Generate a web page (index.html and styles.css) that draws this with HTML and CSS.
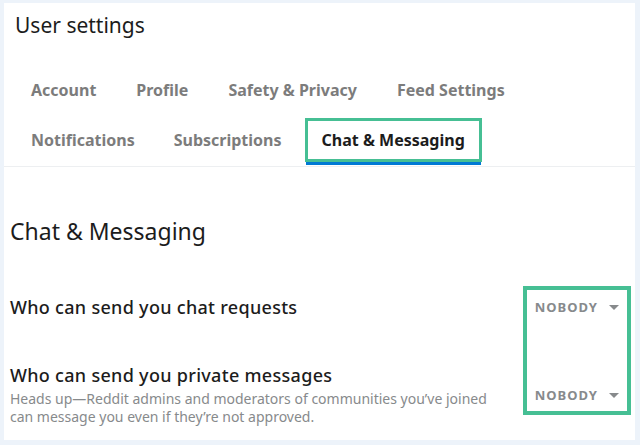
FILE: index.html
```html
<!DOCTYPE html>
<html lang="en">
<head>
  <meta charset="UTF-8">
  <meta name="viewport" content="width=device-width, initial-scale=1.0">
  <title>User settings</title>
  <link rel="stylesheet" href="styles.css">
</head>
<body>
  <div class="panel">
    <h1 class="page-title">User settings</h1>

    <!-- Settings tabs -->
    <nav class="tabs">
      <a class="tab">Account</a>
      <a class="tab">Profile</a>
      <a class="tab">Safety &amp; Privacy</a>
      <a class="tab">Feed Settings</a>
      <a class="tab">Notifications</a>
      <a class="tab">Subscriptions</a>
      <a class="tab active">Chat &amp; Messaging</a>
    </nav>

    <!-- Chat & Messaging section -->
    <section class="section">
      <h2 class="section-title">Chat &amp; Messaging</h2>

      <div class="settings">
        <div class="setting">
          <div class="setting-text">
            <h3 class="setting-label">Who can send you chat requests</h3>
          </div>
          <button class="dropdown"><span>NOBODY</span><span class="caret"></span></button>
        </div>

        <div class="setting second">
          <div class="setting-text">
            <h3 class="setting-label">Who can send you private messages</h3>
            <p class="setting-desc">Heads up—Reddit admins and moderators of communities you’ve joined can message you even if they’re not approved.</p>
          </div>
          <button class="dropdown"><span>NOBODY</span><span class="caret"></span></button>
        </div>

        <div class="highlight"></div>
      </div>
    </section>
  </div>
</body>
</html>
```

FILE: styles.css
```css
/* General */
html, body {
  margin: 0;
  height: 445px;
  overflow: hidden;
}

body {
  background-color: #edf3fa;
  font-family: 'Noto Sans', 'Open Sans', sans-serif;
  color: #1c1c1c;
}

.panel {
  background-color: #fff;
  margin: 3px 5px 0 4px;
  height: 437px;
  padding-top: 10px;
  box-sizing: border-box;
}

.page-title {
  margin: 0;
  padding-left: 11px;
  font-size: 21px;
  line-height: 24px;
  font-weight: 400;
}

/* Tabs */
.tabs {
  display: flex;
  flex-wrap: wrap;
  column-gap: 6px;
  row-gap: 6px;
  margin-top: 31px;
  padding: 0 10px 4px 10px;
  border-bottom: 1px solid #edeff1;
}

.tab {
  display: block;
  height: 38px;
  line-height: 38px;
  padding: 0 14px;
  border: 3px solid transparent;
  font-size: 16px;
  font-weight: 700;
  color: #7c7c7c;
  white-space: nowrap;
}

.tab:nth-child(5) {
  margin-right: -1px;
}

.tab.active {
  color: #1c1c1c;
  border-color: #46bf94;
  box-shadow: 0 4px 0 -1px #0079d3;
}

/* Section */
.section {
  padding: 0 16px 0 6px;
}

.section-title {
  margin: 50px 0 0 0;
  font-size: 23px;
  line-height: 28px;
  font-weight: 400;
}

.settings {
  position: relative;
  margin-top: 51px;
}

.setting {
  display: flex;
  align-items: center;
  justify-content: space-between;
}

.setting.second {
  margin-top: 46px;
}

.setting-label {
  margin: 0;
  font-size: 18px;
  line-height: 22px;
  font-weight: 500;
  letter-spacing: 0.3px;
}

.setting-desc {
  margin: 4px 0 0 0;
  max-width: 480px;
  font-size: 14px;
  line-height: 18px;
  color: #878a8c;
}

.dropdown {
  display: flex;
  flex-shrink: 0;
  align-items: center;
  background: none;
  border: none;
  padding: 0;
  font-family: inherit;
  font-size: 13px;
  font-weight: 700;
  letter-spacing: 1px;
  color: #878a8c;
}

.caret {
  flex-shrink: 0;
  width: 0;
  height: 0;
  margin-left: 11px;
  border-left: 5px solid transparent;
  border-right: 5px solid transparent;
  border-top: 5px solid #878a8c;
}

/* Annotation box over the dropdowns */
.highlight {
  position: absolute;
  top: -10px;
  right: -12px;
  width: 100px;
  height: 121px;
  border: 4px solid #46bf94;
}
```
